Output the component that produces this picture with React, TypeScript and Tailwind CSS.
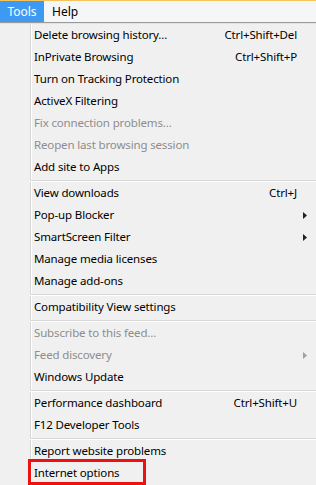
import React from "react";

type Item =
  | { type: "sep" }
  | { type: "item"; label: string; shortcut?: string; disabled?: boolean; sub?: boolean };

const items: Item[] = [
  { type: "item", label: "Delete browsing history...", shortcut: "Ctrl+Shift+Del" },
  { type: "item", label: "InPrivate Browsing", shortcut: "Ctrl+Shift+P" },
  { type: "item", label: "Turn on Tracking Protection" },
  { type: "item", label: "ActiveX Filtering" },
  { type: "item", label: "Fix connection problems...", disabled: true },
  { type: "item", label: "Reopen last browsing session", disabled: true },
  { type: "item", label: "Add site to Apps" },
  { type: "sep" },
  { type: "item", label: "View downloads", shortcut: "Ctrl+J" },
  { type: "item", label: "Pop-up Blocker", sub: true },
  { type: "item", label: "SmartScreen Filter", sub: true },
  { type: "item", label: "Manage media licenses" },
  { type: "item", label: "Manage add-ons" },
  { type: "sep" },
  { type: "item", label: "Compatibility View settings" },
  { type: "sep" },
  { type: "item", label: "Subscribe to this feed...", disabled: true },
  { type: "item", label: "Feed discovery", disabled: true, sub: true },
  { type: "item", label: "Windows Update" },
  { type: "sep" },
  { type: "item", label: "Performance dashboard", shortcut: "Ctrl+Shift+U" },
  { type: "item", label: "F12 Developer Tools" },
  { type: "sep" },
  { type: "item", label: "Report website problems" },
  { type: "item", label: "Internet options" },
];

function Arrow({ disabled }: { disabled?: boolean }) {
  return (
    <svg width="4" height="7" viewBox="0 0 4 7" className="block">
      <path d="M0 0 L4 3.5 L0 7 Z" fill={disabled ? "#a0a0a0" : "#202020"} />
    </svg>
  );
}

export default function App() {
  return (
    <div
      className="relative w-[316px] h-[485px] overflow-hidden bg-[#f0f0f0] text-[11.5px] tracking-[-0.15px]"
      style={{ fontFamily: '"Noto Sans", "Open Sans", sans-serif' }}
    >
      {/* menu bar */}
      <div className="h-[24px] flex flex-col">
        <div className="h-[1px] bg-[#f4c45c]" />
        <div className="h-[21px] bg-[#f5f6f7] flex items-stretch text-[12px] tracking-normal">
          <div className="w-[44px] bg-[#3d99f2] text-white flex items-center justify-center">Tools</div>
          <div className="pl-[8px] flex items-center text-black">Help</div>
        </div>
        <div className="h-[1px] bg-[#999999]" />
        <div className="h-[1px] bg-[#e3e3e3]" />
      </div>
      {/* menu body */}
      <div className="relative flex">
        <div className="w-[30px] shrink-0" />
        <div className="w-[1px] bg-[#d7d7d7] shrink-0" />
        <div className="w-[1px] bg-[#ffffff] shrink-0" />
        <div className="flex-1 flex flex-col">
          {items.map((it, i) =>
            it.type === "sep" ? (
              <div key={i} className="h-[4px] flex flex-col ml-[-2px]">
                <div className="h-[2px]" />
                <div className="h-[1px] bg-[#d7d7d7]" />
                <div className="h-[1px] bg-[#ffffff]" />
              </div>
            ) : (
              <div
                key={i}
                className={
                  "h-[22px] flex items-center pl-[2px] " +
                  (it.disabled ? "text-[#8d8d8d]" : "text-black")
                }
              >
                <span className="flex-1 whitespace-nowrap">{it.label}</span>
                <span className="w-[90px] text-right whitespace-nowrap">{it.shortcut ?? ""}</span>
                <span className="w-[19px] flex justify-start pl-[6px]">
                  {it.sub ? <Arrow disabled={it.disabled} /> : null}
                </span>
              </div>
            )
          )}
        </div>
      </div>
      <div className="absolute left-[28px] top-[459px] w-[118px] h-[26px] border-[3px] border-[#ee1111]" />
    </div>
  );
}
